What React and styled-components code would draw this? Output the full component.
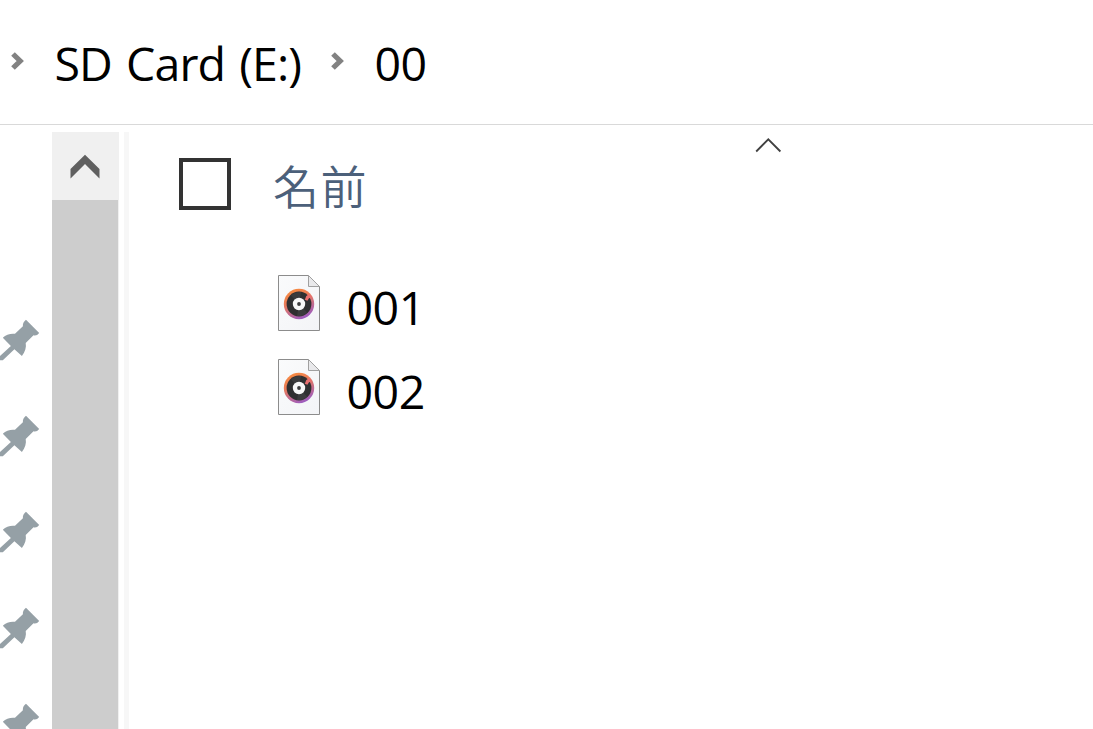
import React from "react";
import styled, { createGlobalStyle } from "styled-components";

const GlobalStyle = createGlobalStyle`
  html, body, #root { height: 100%; }
  body {
    margin: 0;
    overflow: hidden;
    background: #fff;
    color: #000;
    font-family: "Open Sans", "Noto Sans", "Noto Sans CJK JP", sans-serif;
  }
  svg { display: block; flex: none; }
`;

const Window = styled.div`
  display: flex;
  flex-direction: column;
  height: 100vh;
  overflow: hidden;
`;

const AddressBar = styled.nav`
  display: flex;
  align-items: center;
  flex: none;
  height: 124px;
  padding-left: 10px;
  border-bottom: 1px solid #d9d9d9;
`;

const Crumb = styled.span`
  width: ${(p) => p.$width}px;
  margin-left: 30.5px;
  padding-top: 2px;
  font-size: 46.5px;
  line-height: 64px;
  letter-spacing: ${(p) => p.$spacing}px;
  word-spacing: 3px;
  white-space: nowrap;
`;

const CrumbArrow = styled.svg`
  width: 14px;
  height: 20px;
  margin-bottom: 2px;
`;

const Body = styled.div`
  display: flex;
  flex: 1;
  min-height: 0;
  padding-top: 7px;
`;

const QuickAccess = styled.aside`
  display: flex;
  flex-direction: column;
  flex: none;
  gap: 54px;
  width: 52px;
  padding-top: 187px;
  box-sizing: border-box;
  overflow: hidden;
`;

const Scrollbar = styled.div`
  display: flex;
  flex-direction: column;
  flex: none;
  width: 67px;
  background: #f0f0f0;
`;

const ScrollUp = styled.div`
  display: flex;
  justify-content: center;
  flex: none;
  height: 68px;
  padding: 22px 1px 0 0;
  box-sizing: border-box;
`;

const Thumb = styled.div`
  flex: 1;
  margin-right: 1px;
  background: #cdcdcd;
`;

const Splitter = styled.div`
  flex: none;
  width: 5px;
  margin-left: 5px;
  background: #f7f7f7;
`;

const FileList = styled.main`
  flex: 1;
`;

const ColumnHeader = styled.div`
  display: flex;
  align-items: flex-start;
  height: 132px;
`;

const Checkbox = styled.div`
  width: 44px;
  height: 44px;
  margin: 26px 0 0 50px;
  border: 4px solid #333;
`;

const ColumnName = styled.div`
  width: 481px;
  margin: 20px 0 0 42px;
  color: #4c607a;
  font-family: "Noto Sans CJK JP", sans-serif;
  font-size: 46px;
  font-weight: 350;
  line-height: 64px;
  letter-spacing: 1.5px;
`;

const SortArrow = styled.svg`
  width: 28px;
  height: 16px;
  margin-top: 5px;
`;

const FileRow = styled.div`
  display: flex;
  align-items: center;
  height: 84px;
  padding-left: 149px;
`;

const IconBox = styled.div`
  margin: 0 26.5px 6px 0;
`;

const FileName = styled.span`
  padding-top: 2px;
  font-size: 46.5px;
  line-height: 64px;
  letter-spacing: -0.5px;
`;

const Chevron = () => (
  <CrumbArrow viewBox="0 0 14 20">
    <path d="M3 3 10.2 10 3 17" fill="none" stroke="#828282" strokeWidth="5.2" />
  </CrumbArrow>
);

const Pin = () => (
  <svg width="42" height="42" viewBox="0 9 42 42">
    <path
      d="M26 9.7 39.2 23C37.5 25.2 35.7 25.8 33.5 25.3L25.7 33C26.5 37 25.2 42 21.9 46L14.4 39.2 2.8 50.2H0V46L10.9 36 2.8 27.8C6 24.6 10.5 23.2 15 23.8L22.9 16.2C22.6 13.6 23.6 11.5 26 9.7Z"
      fill="#95a0a6"
    />
  </svg>
);

const AudioFile = ({ id }) => (
  <svg width="42" height="56" viewBox="0 0 42 56">
    <defs>
      <linearGradient id={`ring-${id}`} x1="0.2" y1="0" x2="0.65" y2="1">
        <stop offset="0" stopColor="#f98c3c" />
        <stop offset="0.4" stopColor="#e87a5c" />
        <stop offset="1" stopColor="#9a5bc4" />
      </linearGradient>
      <linearGradient id={`page-${id}`} x1="0" y1="0" x2="1" y2="1">
        <stop offset="0" stopColor="#fafbfc" />
        <stop offset="1" stopColor="#f3f4f7" />
      </linearGradient>
    </defs>
    <path d="M.5.5h30l11 11v44H.5z" fill={`url(#page-${id})`} stroke="#8c8c8c" />
    <path d="M30.5.5v11h11z" fill="#e9e9eb" stroke="#a0a0a0" />
    <circle cx="21" cy="29" r="15.2" fill={`url(#ring-${id})`} />
    <circle cx="21" cy="29" r="12.4" fill="#2f2f31" />
    <path d="M13 20.5A12 12 0 0 1 23 17L21 29zM29 37.5A12 12 0 0 1 19 41L21 29z" fill="#454547" opacity=".55" />
    <path d="M26.8 24.8 28.3 21 31.5 19 34.2 22.2 31 23.2 29.4 25.8Z" fill="#e86f70" />
    <circle cx="21" cy="29" r="6.2" fill="#f7f7f8" />
    <circle cx="21" cy="29" r="1.9" fill="#3c3c3e" />
  </svg>
);

const pins = [1, 2, 3, 4, 5];
const files = ["001", "002"];

export default function App() {
  return (
    <Window>
      <GlobalStyle />
      <AddressBar>
        <Chevron />
        <Crumb $width={275.5} $spacing={-0.9}>SD Card (E:)</Crumb>
        <Chevron />
        <Crumb $width={60} $spacing={-0.7}>00</Crumb>
      </AddressBar>
      <Body>
        <QuickAccess>
          {pins.map((p) => <Pin key={p} />)}
        </QuickAccess>
        <Scrollbar>
          <ScrollUp>
            <svg width="30" height="25" viewBox="0 0 30 25">
              <path d="M.5 15 15 .8 29.5 15V24.5L15 10 .5 24.5Z" fill="#606060" />
            </svg>
          </ScrollUp>
          <Thumb />
        </Scrollbar>
        <Splitter />
        <FileList>
          <ColumnHeader>
            <Checkbox />
            <ColumnName>名前</ColumnName>
            <SortArrow viewBox="0 0 28 16">
              <path d="M2.2 14.5 14.3 2.3 26.4 14.5" fill="none" stroke="#404040" strokeWidth="1.8" />
            </SortArrow>
          </ColumnHeader>
          {files.map((name) => (
            <FileRow key={name}>
              <IconBox><AudioFile id={name} /></IconBox>
              <FileName>{name}</FileName>
            </FileRow>
          ))}
        </FileList>
      </Body>
    </Window>
  );
}
